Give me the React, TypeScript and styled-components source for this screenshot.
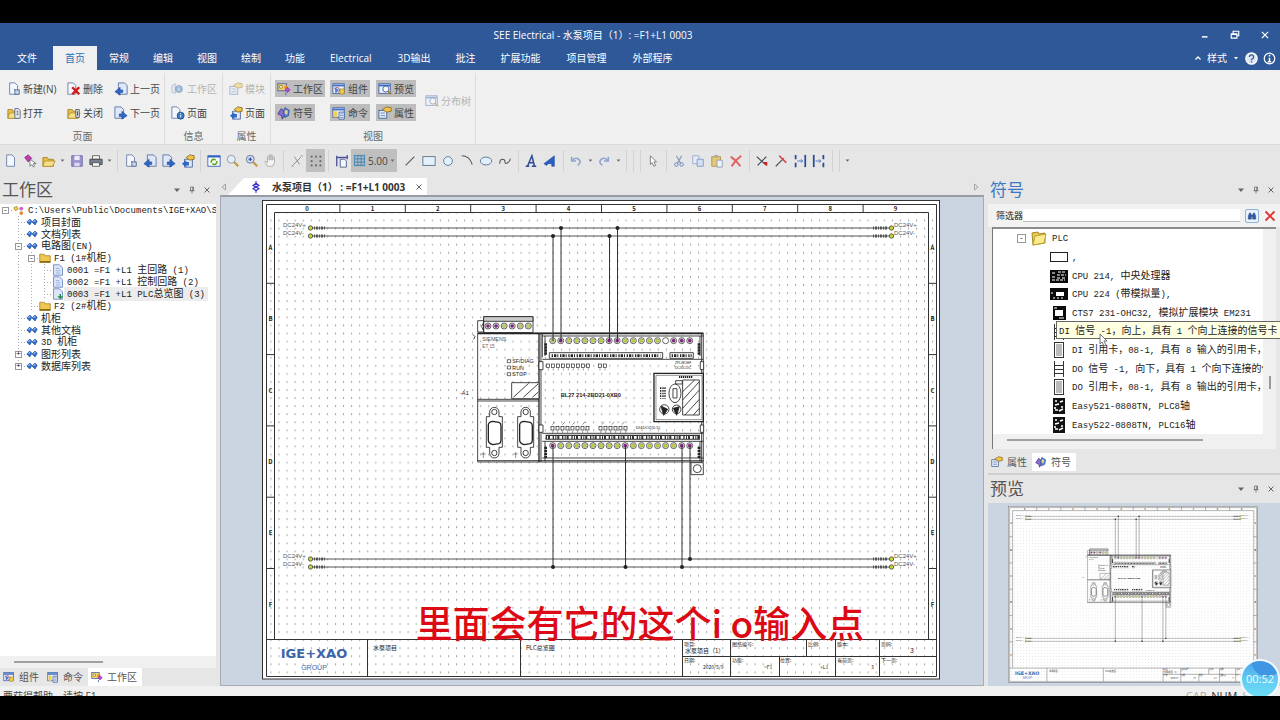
import React from "react";
import styled, { createGlobalStyle, css } from "styled-components";

const ui = `"Open Sans", "Noto Sans CJK SC", sans-serif`;
const mono = `"Liberation Mono", "Noto Sans CJK SC", monospace`;

const GlobalStyle = createGlobalStyle`
  *, *::before, *::after { box-sizing: border-box; }
  body { margin: 0; background: #000; }
  button, input { font: inherit; color: inherit; margin: 0; padding: 0; border: 0; background: none; border-radius: 0; }
  ul { list-style: none; margin: 0; padding: 0; }
  svg { display: block; flex: none; }
`;

/* ---------- icons ---------- */

const page = (x = 3, y = 1) => (
  <path d={`M${x} ${y}h6l3 3v10h-9z`} fill="#f4f7fd" stroke="#6a7ba6" />
);
const folder = (
  <>
    <path d="M1 4h5l1 2h6v8H1z" fill="#e3bd4e" stroke="#a98524" />
    <path d="M3 8h12l-3 6H1z" fill="#f8e08a" stroke="#b8932c" />
  </>
);
const badgeInfo = (cx: number, cy: number) => (
  <>
    <circle cx={cx} cy={cy} r="4" fill="#3b7dc4" stroke="#1f4f8c" />
    <path d={`M${cx} ${cy - 1}v3M${cx} ${cy - 3}v1`} stroke="#fff" />
  </>
);
const windowShape = (
  <>
    <rect x="1" y="2" width="13" height="11" fill="#e8f0fb" stroke="#3f62a8" />
    <path d="M1 3h13v2H1z" fill="#3f6fc0" />
  </>
);

const icons: Record<string, React.ReactNode> = {
  doc: page(),
  docNew: <>{page()}<path d="M8 8l5 5M13 9v4H9" stroke="#3c5f9c" fill="none" /><path d="M9 9h5v5H9z" fill="#cbd9ef" stroke="#4f6596" /></>,
  docDelete: <>{page(1)}<path d="M6 6l8 8M14 6l-8 8" stroke="#d01818" strokeWidth="2.8" /></>,
  docPrev: <><path d="M5 1h7l3 3v10H5z" fill="#dfe8f8" stroke="#5a6fa6" /><path d="M10 9H7V6l-6 5 6 4v-3h3z" fill="#2f66c9" stroke="#1d438c" strokeWidth=".6" /></>,
  docNext: <><path d="M1 1h7l3 3v10H1z" fill="#dfe8f8" stroke="#5a6fa6" /><path d="M6 9h3V6l6 5-6 4v-3H6z" fill="#2f66c9" stroke="#1d438c" strokeWidth=".6" /></>,
  folder,
  folderPage: <>{folder}<path d="M9 3h4l2 2v9H9z" fill="#eef2fa" stroke="#4f5f86" /><path d="M11 6h2M11 8h2M11 10h2" stroke="#444" /></>,
  folderClose: <>{folder}<path d="M10 4h4v9h-4z" fill="#dfe4ea" stroke="#555" /><path d="M12 6v5" stroke="#345" /></>,
  info: <><path d="M1 4l4-2v11l-4-1z" fill="#cfdcf0" stroke="#7d94bd" />{badgeInfo(9, 8)}</>,
  docInfo: <>{page(1)}{badgeInfo(11, 11)}</>,
  props: <><rect x="1" y="5" width="9" height="9" fill="#dfe8f7" stroke="#49659c" /><path d="M3 8h5M3 11h5" stroke="#6b86bd" /><path d="M5 4l5-3 5 1v4l-5 1z" fill="#f1c54c" stroke="#8d6b1c" /></>,
  propsPage: <><path d="M4 6h9v9H4z" fill="#dfe8f7" stroke="#49659c" /><path d="M6 4l4-3 5 1v4l-5 1z" fill="#f1c54c" stroke="#8d6b1c" /><path d="M9 9H6V7l-5 4 5 4v-2h3z" fill="#2f66c9" /></>,
  workspace: <><rect x="1" y="2" width="10" height="8" fill="#f4d66a" stroke="#3f62a8" /><path d="M3 4h3v3H3z" fill="#fff" stroke="#a07c22" /><circle cx="10" cy="6" r="2" fill="#e98a2b" /><path d="M12 6l3 3-3 3-3-3z" fill="#b54bd0" stroke="#6d2384" strokeWidth=".6" /><path d="M10 12v3" stroke="#3f62a8" /></>,
  component: <>{windowShape}<path d="M3 8a3 3 0 1 1 4 4" fill="none" stroke="#c23a3a" /><path d="M9 8h5v5a3 2 0 0 1-5 0z" fill="#f3cb4a" stroke="#9a7a1c" strokeWidth=".7" /><path d="M3 6l5 3-4 4z" fill="#4d7fd6" /></>,
  preview: <>{windowShape}<circle cx="9" cy="8" r="3.500" fill="#fff" fillOpacity=".8" stroke="#3a5890" /><path d="M11 10l4 4" stroke="#a8752c" strokeWidth="2" /></>,
  symbol: <><path d="M5 3L1 9l4 2 1 4 4-7z" fill="#8a6fd1" stroke="#4a358c" /><path d="M9 2l5 3-1 6-4 2-2-6z" fill="#5f8fdc" stroke="#2f4f96" /><path d="M9 5h3v4H9z" fill="#f1d36a" /></>,
  command: <>{windowShape}<path d="M2 6h4v7H2z" fill="#f2cf57" /><path d="M8 7h6v8H8z" fill="#fff" stroke="#3f62a8" /><path d="M9 9h4M9 11h4M9 13h4" stroke="#3f62a8" strokeWidth=".8" /></>,
  library: <><path d="M2 4l4-3 4 4-4 4z" fill="#c23bb0" stroke="#82217a" /><path d="M8 6v8l2-2 2 3 1-1-1-3h3z" fill="#fff" stroke="#555" strokeWidth=".8" /></>,
  save: <><path d="M2 2h12v12H2z" fill="#9a93cf" stroke="#6d66a8" /><path d="M5 2h6v5H5z" fill="#eceaf8" /><path d="M5 10h6v4H5z" fill="#dcdaf0" /></>,
  print: <><path d="M4 2h8v4H4z" fill="#fff" stroke="#555" /><path d="M1 6h14v6H1z" fill="#777f8c" stroke="#444" /><path d="M4 10h8v4H4z" fill="#fff" stroke="#555" /></>,
  refresh: <><rect x="1" y="2" width="14" height="12" fill="#fff" stroke="#2f62c0" /><path d="M1 2h14v2H1z" fill="#2f62c0" /><path d="M5 10a3 3 0 0 1 3-4l2 1M11 8a3 3 0 0 1-3 4l-2-1" fill="none" stroke="#59a516" strokeWidth="1.8" /></>,
  zoom: <><circle cx="6" cy="6" r="4.5" fill="#e4eef8" stroke="#8a93a1" /><path d="M9.500 9.500l4.500 4.500" stroke="#c59a3e" strokeWidth="2.400" /></>,
  zoomIn: <><circle cx="6" cy="6" r="4.500" fill="#cfdcf2" stroke="#66718f" /><path d="M4 6h4M6 4v4" stroke="#2a4ea0" strokeWidth="1.400" /><path d="M9.500 9.500l4.500 4.500" stroke="#c59a3e" strokeWidth="2.400" /></>,
  hand: <path d="M4 14L1 9l1-1 2 2V3l1-1 1 1v4-6l1-.500 1 .500v6-5l1-.500 1 .500v5-3l1-.500 1 .500v6l-2 4z" fill="#f3f3f3" stroke="#a9a9a9" />,
  snap: <><path d="M2 14L13 3M5 3l6 9" stroke="#888" fill="none" /><path d="M12 2h3M2 14h2" stroke="#aaa" /></>,
  dots: <path d="M2 2h2v2H2zM7 2h2v2H7zM12 2h2v2h-2zM2 7h2v2H2zM12 7h2v2h-2zM2 12h2v2H2zM7 12h2v2H7zM12 12h2v2h-2z" fill="#5d5d66" />,
  dims: <><path d="M2 2v12M2 4h12M14 1v5" stroke="#4b4f9a" strokeWidth="1.500" fill="none" /><path d="M6 6h5l2 2v7H6z" fill="#f4f7fd" stroke="#4a5b86" /></>,
  grid: <path d="M2 1v14M6 1v14M10 1v14M14 1v14M1 2h14M1 6h14M1 10h14M1 14h14" stroke="#4f8db8" strokeWidth="1.400" />,
  line: <path d="M3 13L13 3" stroke="#555" strokeWidth="1.300" />,
  rect: <rect x="1" y="3" width="14" height="10" fill="#e5f1fa" stroke="#54718f" />,
  circle: <circle cx="8" cy="8" r="5" fill="#e5f1fa" stroke="#54718f" />,
  arc: <path d="M2 2q9 0 12 10" fill="none" stroke="#555" strokeWidth="1.200" />,
  ellipse: <ellipse cx="8" cy="8" rx="6.500" ry="4.500" fill="#dfeefa" stroke="#54718f" />,
  curve: <path d="M2 11q0-5 3-5t3 3 3 1 3-5" fill="none" stroke="#555" strokeWidth="1.200" />,
  text: <><path d="M2 14h4M9 14h5M4 14l5-12 3 12M6 10h5" fill="none" stroke="#2c4c94" strokeWidth="1.700" /></>,
  textBlock: <path d="M1 11l12-9v12h-3v-3H6l-2 2z" fill="#2760c4" stroke="#1d4696" strokeWidth=".600" />,
  undo: <path d="M3 3v5h5M3 8q4-5 8-2t-1 7" fill="none" stroke="#8fa4ce" strokeWidth="1.800" />,
  redo: <path d="M13 3v5H8M13 8Q9 3 5 6t1 7" fill="none" stroke="#8fa4ce" strokeWidth="1.800" />,
  cursor: <path d="M5 2v10l2-2 2 4 2-1-2-4h3z" fill="#fff" stroke="#70747c" />,
  cut: <><path d="M5 2l5 9M11 2L6 11" stroke="#8b9bb8" strokeWidth="1.400" /><circle cx="5" cy="12" r="2" fill="none" stroke="#5f7fbd" /><circle cx="11" cy="12" r="2" fill="none" stroke="#5f7fbd" /></>,
  copy: <><path d="M2 2h7v9H2z" fill="#e4ebf7" stroke="#97a9cd" /><path d="M7 6h7v8H7z" fill="#d3dff3" stroke="#8497c2" /></>,
  paste: <><path d="M2 3h10v11H2z" fill="#e5c874" stroke="#b09449" /><path d="M5 1h4v3H5z" fill="#aaa" /><path d="M8 7h6v8H8z" fill="#eef2fa" stroke="#8d9bb8" /></>,
  remove: <path d="M2 3q6 4 11 11M14 2Q7 7 3 14" fill="none" stroke="#e06363" strokeWidth="2.400" />,
  cross: <path d="M2 2l12 12M14 2L2 14" stroke="#e03030" strokeWidth="2.400" />,
  cutWire: <><path d="M2 3l11 10M13 3L3 13" stroke="#444b55" strokeWidth="1.400" /><path d="M9 9h5v5z" fill="#d82020" /></>,
  trimWire: <><path d="M2 14L11 5" stroke="#555" strokeWidth="1.400" /><path d="M6 2l8 8" stroke="#d83c4a" strokeWidth="1.800" /></>,
  alignRight: <><path d="M14 1v14" stroke="#294a97" strokeWidth="2" /><path d="M3 1v14" stroke="#294a97" strokeWidth="2" strokeDasharray="5 4" /><path d="M5 8h6M9 6l2 2-2 2" stroke="#3f6fc0" fill="none" /></>,
  alignLeft: <><path d="M2 1v14" stroke="#294a97" strokeWidth="2" /><path d="M13 1v14" stroke="#294a97" strokeWidth="2" strokeDasharray="5 4" /><path d="M4 8h6M8 6l2 2-2 2" stroke="#3f6fc0" fill="none" /></>,
  sheetMark: <><path d="M8 0v16" stroke="#3a35c8" strokeWidth="1.400" /><path d="M4 6l4-3 4 3-8 4 4 3 4-3z" fill="#dcdcff" stroke="#3a35c8" strokeWidth="1.500" /></>,
  gems: <><path d="M1 8l4-4 3 3-3 5zM8 8l4-4 3 3-3 5z" fill="#2f6fd0" stroke="#1c4690" strokeWidth=".800" /><path d="M2 8l3-3 1 2zM9 8l3-3 1 2z" fill="#9cc4f5" /></>,
  project: <><path d="M1 5l4-2 2 4-4 2z" fill="#f0cf4c" stroke="#a8882c" /><circle cx="11" cy="6" r="2.500" fill="#cb62cf" /><circle cx="11" cy="12" r="2.500" fill="#e08a3c" /></>,
  treeFolder: <><path d="M1 3h6l1 2h7v9H1z" fill="#f0c751" stroke="#a37d1c" /><path d="M1 13h14" stroke="#8d6b14" strokeWidth="2" /></>,
  treeDoc: <><path d="M2 1h8l4 4v10H2z" fill="#dbe6fb" stroke="#5b76b8" /><path d="M5 6h5M5 9h6M5 12h6" stroke="#8aa4dc" /></>,
  treeDocOpen: <><path d="M2 1h8l4 4v10H2z" fill="#dbe6fb" stroke="#5b76b8" /><path d="M7 11h8l-4 4z" fill="#23943a" /><path d="M11 8v4" stroke="#23943a" strokeWidth="2" /></>,
  bigFolder: <><path d="M1 3l6-1 1 2 6-1v10L2 15z" fill="#e9c94c" stroke="#a58a24" /><path d="M4 6l11-2-2 9-11 2z" fill="#fbec8e" stroke="#bda238" /></>,
  find: <path d="M2 13V8l2-5h2v3h4V3h2l2 5v5H9V9H7v4z" fill="#31599f" stroke="#1f3f7a" strokeWidth=".600" />,
  pin: <path d="M5 2h6v7H5zM3 9.500h10M8 10v5M9.500 2v7" fill="none" stroke="#666" strokeWidth="1.500" />,
  close: <path d="M3 3l10 10M13 3L3 13" stroke="#666" strokeWidth="2" />,
  down: <path d="M2 5h12l-6 7z" fill="#666" />,
  scrollLeft: <path d="M11 2v12L4 8z" fill="none" stroke="#888" strokeWidth="1.400" />,
  scrollRight: <path d="M5 2v12l7-6z" fill="none" stroke="#888" strokeWidth="1.400" />,
  minimize: <path d="M3 11h9" stroke="#fff" strokeWidth="2.400" />,
  restore: <path d="M5 6V2h9v7h-3M2 6h9v7H2zM2 7h9" fill="none" stroke="#fff" strokeWidth="1.800" />,
  closeWhite: <path d="M3 3l10 10M13 3L3 13" stroke="#fff" strokeWidth="2" />,
  chevronUp: <path d="M3 11l5-5 5 5" fill="none" stroke="#fff" strokeWidth="2.600" />,
  caretWhite: <path d="M4 6h8l-4 5z" fill="#fff" />,
  help: <><circle cx="8" cy="8" r="7" fill="#dfe7f3" stroke="#fff" strokeWidth="1.500" /><path d="M5.500 6q0-2.500 2.500-2.500T10.500 6 8 9v1M8 11.500v1.500" fill="none" stroke="#2f5898" strokeWidth="1.600" /></>,
  about: <><circle cx="8" cy="8" r="6.500" fill="none" stroke="#fff" strokeWidth="1.500" /><path d="M8 7v5M6 12h4M8 3.500v2" stroke="#fff" strokeWidth="1.800" /></>,
  plcBox: <rect x="0.500" y="3.500" width="17" height="9" fill="#fff" stroke="#222" />,
  plc214: <><rect x="0" y="2" width="18" height="13" fill="#0a0a0a" /><path d="M2 5h4M8 4h8M7 7h9M2 9h3M7 10h4M12 10h4M2 12h13" stroke="#fff" strokeWidth="1" strokeDasharray="3 1" /></>,
  plc224: <><rect x="0" y="2" width="18" height="12" fill="#0a0a0a" /><rect x="6" y="6" width="8" height="4" fill="#fff" /><path d="M2 6v4M3 12h12" stroke="#fff" strokeDasharray="2 2" /></>,
  plc231: <><path d="M3 1h13v14H3z" fill="#0a0a0a" /><path d="M5 5h8v6H5z" fill="#fff" /><path d="M4 3h3M9 13h5" stroke="#fff" /></>,
  plcDI: <><path d="M4.500 0v16M13.500 0v16M4 .500h10M4 15.500h10" stroke="#333" fill="none" /><path d="M6 3h6M6 5h6M6 7h6M6 9h6M6 11h6M6 13h6" stroke="#777" /></>,
  plcDO: <path d="M4.500 0v16M13.500 0v16M4 4.500h10M4 8.500h10M4 12.500h10" stroke="#333" fill="none" />,
  plcEasy: <><path d="M3 0h12v16H3z" fill="#111" /><path d="M5 3h2M5 7l4-1M5 12h3M10 4l3-1M11 9h2M9 13l4-2M5 9v2" stroke="#fff" strokeWidth="1.600" /></>,
};

const Icon = ({ name, size = 14 }: { name: string; size?: number }) => (
  <svg width={size} height={size} viewBox={name.startsWith("plc") ? "0 0 18 16" : "0 0 16 16"} aria-hidden="true">
    {icons[name]}
  </svg>
);

/* ---------- frame ---------- */

const Stage = styled.div`
  display: flex;
  flex-direction: column;
  min-height: 100vh;
  padding: 23px 0 24px;
  background: #000;
`;
const Frame = styled.div`
  position: relative;
  flex: 1;
  display: flex;
  flex-direction: column;
  overflow: hidden;
  background: #e6e6e6;
  color: #444;
  font-family: ${ui};
  font-size: 10px;
  line-height: 14px;
`;

/* ---------- title bar and tabs ---------- */

const TitleBar = styled.header`
  display: grid;
  grid-template-columns: 1fr auto 1fr 84px;
  align-items: center;
  height: 23px;
  padding-right: 10px;
  background: #2f5898;
  color: #fff;
`;
const Title = styled.h1`
  grid-column: 2;
  margin: 0;
  font-size: 10px;
  font-weight: 400;
  white-space: pre;
`;
const WindowButtons = styled.div`
  grid-column: 4;
  display: flex;
  justify-content: flex-end;
  gap: 20px;
`;
const IconButton = styled.button`
  display: inline-flex;
  align-items: center;
  justify-content: center;
`;
const TabBar = styled.nav`
  display: flex;
  height: 24px;
  padding-left: 1px;
  background: #2f5898;
  color: #fff;
`;
const MenuTab = styled.button<{ $active?: boolean; $pad: number }>`
  padding: 0 ${(p) => p.$pad}px;
  white-space: nowrap;
  ${(p) => p.$active && css`background: #f0f0f0; color: #2a6fb8;`}
`;
const TabTools = styled.div`
  display: flex;
  align-items: center;
  gap: 5px;
  margin-left: auto;
  padding-right: 4px;
`;

/* ---------- ribbon ---------- */

const Ribbon = styled.section`
  display: flex;
  height: 75px;
  padding: 3px 0 0 1px;
  background: #f0f0f0;
  border-bottom: 1px solid #dadada;
`;
const Group = styled.div`
  display: flex;
  flex-direction: column;
  border-right: 1px solid #dcdcdc;
  padding: 7px 4px 0;
`;
const GroupGrid = styled.div<{ $cols: string }>`
  display: grid;
  grid-template-columns: ${(p) => p.$cols};
  grid-template-rows: 17px 17px;
  row-gap: 7px;
  justify-items: start;
`;
const GroupLabel = styled.div`
  margin-top: 8px;
  text-align: center;
  color: #666;
`;
const RibbonButton = styled.button<{ $on?: boolean; $tall?: boolean }>`
  display: flex;
  align-items: center;
  gap: 2px;
  height: 17px;
  padding: 0 2px;
  white-space: nowrap;
  background: ${(p) => (p.$on ? "#bdbdbd" : "transparent")};
  ${(p) => p.$tall && css`grid-row: 1 / 3; grid-column: 4; align-self: center;`}
  &:disabled { color: #b4b4b4; }
  &:disabled svg { opacity: 0.45; }
`;

type Item = { icon: string; text: string; on?: boolean; off?: boolean; tall?: boolean };
const groups: { label: string; cols: string; items: Item[] }[] = [
  {
    label: "页面",
    cols: "60px 47px 48px",
    items: [
      { icon: "docNew", text: "新建(N)" },
      { icon: "docDelete", text: "删除" },
      { icon: "docPrev", text: "上一页" },
      { icon: "folderPage", text: "打开" },
      { icon: "folderClose", text: "关闭" },
      { icon: "docNext", text: "下一页" },
    ],
  },
  {
    label: "信息",
    cols: "49px",
    items: [{ icon: "info", text: "工作区", off: true }, { icon: "docInfo", text: "页面" }],
  },
  {
    label: "属性",
    cols: "39px",
    items: [{ icon: "props", text: "模块", off: true }, { icon: "propsPage", text: "页面" }],
  },
  {
    label: "视图",
    cols: "55px 46px 47px 48px",
    items: [
      { icon: "workspace", text: "工作区", on: true },
      { icon: "component", text: "组件", on: true },
      { icon: "preview", text: "预览", on: true },
      { icon: "symbol", text: "符号", on: true },
      { icon: "command", text: "命令", on: true },
      { icon: "props", text: "属性", on: true },
      { icon: "preview", text: "分布树", off: true, tall: true },
    ],
  },
];

/* ---------- toolbar ---------- */

const Toolbar = styled.section`
  display: flex;
  align-items: center;
  height: 31px;
  padding-left: 1px;
`;
const Tool = styled.button<{ $on?: boolean }>`
  display: flex;
  align-items: center;
  justify-content: center;
  width: 19px;
  height: 23px;
  background: ${(p) => (p.$on ? "#bfbfbf" : "transparent")};
`;
const Arrow = styled.button`
  display: flex;
  justify-content: center;
  width: 9px;
`;
const Separator = styled.span`
  width: 1px;
  height: 22px;
  margin: 0 3px;
  background: #d2d2d2;
`;
const GridStep = styled.button`
  display: flex;
  align-items: center;
  gap: 2px;
  height: 23px;
  margin-right: 4px;
  padding: 0 2px;
  background: #bfbfbf;
`;
const tools =
  "doc library folder v save print v | docNew docPrev docNext propsPage | refresh zoom zoomIn hand | snap dots! | dims # line rect circle arc ellipse curve | text textBlock | undo v redo v | | | cursor | cut copy paste remove | cutWire trimWire alignRight alignLeft | | v".split(" ");

/* ---------- panels ---------- */

const Main = styled.main`
  flex: 1;
  display: grid;
  grid-template-columns: 216px minmax(0, 1fr) 292px;
  column-gap: 4px;
`;
const Panel = styled.aside`
  display: flex;
  flex-direction: column;
  min-width: 0;
`;
const PanelHead = styled.div`
  display: flex;
  align-items: center;
  height: 28px;
  padding: 0 2px;
`;
const PanelTitle = styled.h2<{ $active?: boolean }>`
  flex: 1;
  margin: 0;
  font-size: 17px;
  line-height: 24px;
  font-weight: 400;
  color: ${(p) => (p.$active ? "#3a78c3" : "#555")};
`;
const HeadButton = styled(IconButton)`
  width: 15px;
`;
const Head = ({ title, active }: { title: string; active?: boolean }) => (
  <PanelHead>
    <PanelTitle $active={active}>{title}</PanelTitle>
    <HeadButton aria-label="菜单"><Icon name="down" size={8} /></HeadButton>
    <HeadButton aria-label="固定"><Icon name="pin" size={8} /></HeadButton>
    <HeadButton aria-label="关闭"><Icon name="close" size={8} /></HeadButton>
  </PanelHead>
);

const Latin = styled.span`
  font-family: ${mono};
  font-size: 9px;
  white-space: pre;
`;
const Han = styled.span`
  font-family: "Noto Sans CJK SC", sans-serif;
  font-size: 10px;
`;
const MonoText = ({ children }: { children: string }) => (
  <>
    {children.split(/([\u2e80-\uffef]+)/).filter(Boolean).map((run, i) =>
      /[\u2e80-\uffef]/.test(run) ? <Han key={i}>{run}</Han> : <Latin key={i}>{run}</Latin>
    )}
  </>
);

const Tree = styled.ul`
  flex: 1;
  overflow: hidden;
  background: #fff;
  color: #222;
`;
const TreeRow = styled.li`
  display: flex;
  align-items: center;
  height: 12px;
  line-height: 12px;
  white-space: nowrap;
`;
const Guide = styled.span<{ $line?: boolean; $stub?: boolean }>`
  display: flex;
  align-items: center;
  width: 13px;
  height: 12px;
  padding-left: 2px;
  flex: none;
  background-image:
    ${(p) => (p.$line ? "repeating-linear-gradient(#aaa 0 1px, transparent 1px 3px)" : "none")},
    ${(p) => (p.$stub ? "repeating-linear-gradient(90deg, #aaa 0 1px, transparent 1px 3px)" : "none")};
  background-size: 1px 100%, 8px 1px;
  background-position: 5px 0, 5px 6px;
  background-repeat: no-repeat;
`;
const Toggle = styled.button`
  display: flex;
  align-items: center;
  justify-content: center;
  width: 7px;
  height: 7px;
  border: 1px solid #999;
  background: #fff;
  font-family: ${mono};
  font-size: 8px;
  line-height: 6px;
`;
const TreeText = styled.span<{ $selected?: boolean }>`
  padding: 0 3px;
  background: ${(p) => (p.$selected ? "#ececec" : "transparent")};
`;

type Node = { level: number; icon: string; text: string; toggle?: string; selected?: boolean };
const nodes: Node[] = [
  { level: 0, icon: "project", text: "C:\\Users\\Public\\Documents\\IGE+XAO\\S", toggle: "-" },
  { level: 1, icon: "gems", text: "项目封面" },
  { level: 1, icon: "gems", text: "文档列表" },
  { level: 1, icon: "gems", text: "电路图(EN)", toggle: "-" },
  { level: 2, icon: "treeFolder", text: "F1 (1#机柜)", toggle: "-" },
  { level: 3, icon: "treeDoc", text: "0001 =F1 +L1 主回路 (1)" },
  { level: 3, icon: "treeDoc", text: "0002 =F1 +L1 控制回路 (2)" },
  { level: 3, icon: "treeDocOpen", text: "0003 =F1 +L1 PLC总览图 (3)", selected: true },
  { level: 2, icon: "treeFolder", text: "F2 (2#机柜)" },
  { level: 1, icon: "gems", text: "机柜" },
  { level: 1, icon: "gems", text: "其他文档" },
  { level: 1, icon: "gems", text: "3D 机柜" },
  { level: 1, icon: "gems", text: "图形列表", toggle: "+" },
  { level: 1, icon: "gems", text: "数据库列表", toggle: "+" },
];

const HScroll = styled.div<{ $width: number }>`
  height: 12px;
  padding: 5px 14px;
  background: #f0f0f0;
  &::before {
    content: "";
    display: block;
    width: ${(p) => p.$width}px;
    height: 2px;
    background: #a0a0a0;
  }
`;
const DockTabs = styled.div`
  display: flex;
  height: 18px;
`;
const DockTab = styled.button<{ $active?: boolean }>`
  display: flex;
  align-items: center;
  gap: 4px;
  padding: 0 5px 0 3px;
  color: #555;
  background: ${(p) => (p.$active ? "#fff" : "transparent")};
`;

/* ---------- document area ---------- */

const Center = styled.section`
  display: flex;
  flex-direction: column;
  min-width: 0;
`;
const DocTabs = styled.div`
  display: flex;
  align-items: center;
  height: 19px;
  padding: 2px 4px 0 0;
`;
const DocTab = styled.div`
  display: flex;
  align-items: center;
  gap: 10px;
  height: 17px;
  margin-right: auto;
  padding: 0 4px 0 22px;
  background: #fff;
  color: #333;
  font-weight: 700;
  white-space: pre;
  clip-path: polygon(16px 0, 100% 0, 100% 100%, 0 100%);
`;
const Canvas = styled.div`
  flex: 1;
  padding: 3px 43px 0 41px;
  border: 1px solid #a7abb3;
  border-top: 2px solid #9a9ca3;
  background: #cbd5e2;
`;
const Sheet = styled.svg`
  width: 100%;
  height: auto;
`;

/* ---------- symbols panel ---------- */

const FilterRow = styled.div`
  display: flex;
  align-items: center;
  gap: 5px;
  height: 23px;
  padding: 0 4px 0 8px;
  background: #f2f2f2;
`;
const FilterLabel = styled.label`
  flex: 1;
  display: flex;
  align-items: center;
  color: #222;
  font-size: 9px;
  white-space: nowrap;
`;
const FilterInput = styled.input`
  flex: 1;
  min-width: 0;
  height: 13px;
  background: #fff;
  border-bottom: 1px solid #bbb;
`;
const SmallButton = styled(IconButton)`
  width: 14px;
  height: 14px;
  border: 1px solid #8fb3dc;
  border-radius: 2px;
  background: #eaf3fc;
`;
const ListBox = styled.div`
  display: grid;
  grid-template-columns: minmax(0, 1fr) 13px;
  height: 222px;
  margin: 0 4px 4px;
  border-top: 2px solid #8c8c8c;
  border-left: 1px solid #777;
  background: #f0f0f0;
`;
const SymbolList = styled.ul`
  display: flex;
  flex-direction: column;
  padding-bottom: 3px;
  background: linear-gradient(#fff, #fff) top / 100% 206px no-repeat;
  color: #222;
`;
const SymbolRow = styled.li<{ $root?: boolean }>`
  position: relative;
  flex: 1;
  display: flex;
  align-items: center;
  gap: ${(p) => (p.$root ? 5 : 4)}px;
  min-height: 0;
  padding-left: ${(p) => (p.$root ? 24 : 57)}px;
  white-space: nowrap;
`;
const RowText = styled.span`
  flex: 1;
  min-width: 0;
  overflow: hidden;
  line-height: 14px;
`;
const Tip = styled.div`
  position: absolute;
  z-index: 2;
  left: 63px;
  top: -1px;
  height: 18px;
  padding: 0 2px;
  border: 1px solid #666;
  background: #ffffe1;
  line-height: 16px;
  svg { position: absolute; left: 38px; top: 10px; }
`;
const VScroll = styled.div`
  display: flex;
  justify-content: center;
  padding-top: 147px;
  &::before { content: ""; width: 2px; height: 13px; background: #999; }
`;
const BigToggle = styled(Toggle)`
  width: 9px;
  height: 9px;
`;
const PreviewBox = styled.section`
  flex: 1;
  display: flex;
  flex-direction: column;
  margin-top: 2px;
  border-top: 2px solid #d0d0d0;
`;
const PreviewArea = styled.div`
  flex: 1;
  padding: 3px 22px 0 20px;
  background: #cbd5e2;
`;

const symbols = [
  ["plcBox", ","],
  ["plc214", "CPU 214, 中央处理器"],
  ["plc224", "CPU 224 (带模拟量),"],
  ["plc231", "CTS7 231-OHC32, 模拟扩展模块 EM231"],
  ["plcDO", ""],
  ["plcDI", "DI 引用卡，08-1, 具有 8 输入的引用卡，"],
  ["plcDO", "DO 信号 -1, 向下，具有 1 个向下连接的信"],
  ["plcDI", "DO 引用卡，08-1, 具有 8 输出的引用卡，"],
  ["plcEasy", "Easy521-0808TN, PLC8轴"],
  ["plcEasy", "Easy522-0808TN, PLC16轴"],
];

/* ---------- status bar and overlays ---------- */

const StatusBar = styled.footer`
  display: flex;
  height: 10px;
  padding: 4px 4px 0 3px;
  overflow: hidden;
  background: #f0f0f0;
  line-height: 12px;
`;
const Keys = styled.span`
  display: flex;
  gap: 5px;
  margin-left: auto;
  padding-right: 8px;
  font-size: 11px;
  color: #aaa;
  b { font-weight: 400; color: #333; }
`;
const Subtitle = styled.p`
  position: absolute;
  left: 0;
  right: 0;
  bottom: 50px;
  margin: 0;
  text-align: center;
  font-family: "Noto Sans CJK SC", sans-serif;
  font-size: 37px;
  line-height: 48px;
  font-weight: 500;
  color: #dc0a14;
`;
const Timer = styled.div`
  position: absolute;
  right: 0;
  bottom: -3px;
  width: 40px;
  height: 40px;
  border: 2px solid #f2f8fd;
  border-radius: 50%;
  background: radial-gradient(circle at 70% 0, #3f97e4 0 35%, transparent 36%), linear-gradient(#4ba3ea, #62cdf3 55%, #6fdcf5);
  color: #f4fbff;
  font-size: 11px;
  line-height: 36px;
  text-align: center;
`;

/* ---------- schematic ---------- */

const PITCH = 24.2;
const terminalColor = (k: string) => (k === "p" ? "#8a1d8f" : k === "w" ? "#fff" : "#c3d43a");
const Terminals = ({ x, y, kinds }: { x: number; y: number; kinds: string }) => (
  <>
    {kinds.split("").map((k, i) => (
      <g key={i}>
        <circle cx={x + i * PITCH} cy={y} r="9" fill="#fff" stroke="#444" strokeWidth="2.500" />
        <circle cx={x + i * PITCH} cy={y} r="5.500" fill={terminalColor(k)} stroke={k === "w" ? "#fff" : "#665"} strokeWidth="1" />
      </g>
    ))}
  </>
);
const Squares = ({ x, y, n }: { x: number; y: number; n: number }) => (
  <>
    {Array.from({ length: n }, (_, i) => (
      <g key={i}>
        <rect x={x + i * 15} y={y} width="9" height="10" fill="#fff" stroke="#222" strokeWidth="2" />
        <path d={`M${x + 5 + i * 15} ${y + 13}v6`} stroke="#666" strokeWidth="2" />
      </g>
    ))}
  </>
);
const Port = ({ x }: { x: number }) => (
  <g fill="#fff" stroke="#222" strokeWidth="2.500">
    <path d={`M${x - 24} 350h10v-14a14 14 0 0 1 28 0v14h10v92h-10v18a14 14 0 0 1-28 0v-18h-10z`} />
    <circle cx={x} cy="336" r="8" />
    <circle cx={x} cy="459" r="8" />
    <path d={`M${x - 18} 374q2-10 14-10l18 3q6 2 6 10v44q0 8-6 10l-18 3q-12-2-14-12z`} strokeWidth="4" />
  </g>
);

const Plc = () => (
  <g transform="translate(455 300) scale(0.3333)" fontFamily="Liberation Sans, sans-serif" fill="#222">
    <g fill="none" stroke="#222" strokeWidth="2.500">
      <path d="M86 50h148v48H86z" fill="#fff" />
      <path d="M86 50h148v14H86z" fill="#ccc" />
      <path d="M68 62h18v34H68zM84 70q-8 8 0 20" />
      <path d="M68 100h184v386H68z" />
      <path d="M68 298h184M68 303h184" />
      <path d="M252 100h493v386H252z" />
      <path d="M68 100h677" strokeWidth="5" />
      <path d="M258 100v386M262 108h483M262 178h483M262 172V100M740 100v386M270 108v60M735 108v60M262 400h483M262 424h483M262 474h483M270 424v60M735 424v60M68 482h677" />
      <path d="M252 185h12v24h-12zM252 375h12v22h-12zM736 185h10v24h-10zM736 375h10v22h-10z" fill="#fff" />
      <path d="M170 248h82v48h-82z" fill="#fff" />
      <path d="M175 292l46-42M205 292l44-40M232 292l18-16" />
    </g>
    <Terminals x={99} y={78} kinds="ppypyy" />
    <Terminals x={293} y={122} kinds="ypyyyyyppyyyyywppp" />
    <path d="M283 158h340v17H283zM645 158h70v17h-70z" fill="#fff" stroke="#222" strokeWidth="2.500" />
    <path d="M290 167h326M650 167h60" stroke="#222" strokeWidth="8" strokeDasharray="4 3 7 3 3 5" />
    <path d="M272 412h463" stroke="#333" strokeWidth="15" />
    <path d="M276 412h455" stroke="#fff" strokeWidth="8" strokeDasharray="3 6 8 4 4 3" />
    <path d="M272 130v34M732 130v34M272 440v34M732 440v34" stroke="#222" strokeWidth="8" strokeDasharray="7 2" />
    <Squares x={275} y={192} n={9} />
    <Squares x={430} y={192} n={2} />
    <Squares x={288} y={380} n={8} />
    <Squares x={432} y={380} n={6} />
    <path d="M292 374l8-8M322 374l8-8M352 374l8-8M382 374l8-8M440 374l8-8M470 374l8-8M500 374l8-8" stroke="#555" strokeWidth="2" />
    <text x="82" y="123" fontSize="16" fill="#555">SIEMENS</text>
    <text x="82" y="143" fontSize="14" fill="#666">ET 15</text>
    <text x="172" y="190" fontSize="16">SF/DIAG</text>
    <text x="172" y="209" fontSize="16">RUN</text>
    <text x="172" y="229" fontSize="16">STOP</text>
    <path d="M157 179h10v9h-10zM157 198h10v9h-10zM157 218h10v9h-10z" fill="#fff" stroke="#222" strokeWidth="2" />
    <text x="317" y="291" fontSize="17" fontWeight="700">BL27 214-2BD21-0XB0</text>
    <text x="542" y="388" fontSize="13">DI4DO2(0.5)</text>
    <text x="660" y="193" fontSize="10">ZPL/BOHF</text>
    <text x="660" y="207" fontSize="10">DC/DC/DC</text>
    <text x="15" y="285" fontSize="17">-A1</text>
    <path d="M54 104l6 6-4 8" stroke="#222" strokeWidth="2.500" fill="none" />
    <g fill="#fff" stroke="#222" strokeWidth="2.500">
      <path d="M597 220h148v145H597z" strokeWidth="4" />
      <path d="M603 226h138v133H603z" strokeWidth="1.500" />
      <path d="M683 240h50v105h-50z" />
      <path d="M683 275l36-35M683 300l50-55M683 325l50-55M690 345l43-47M715 345l18-20" />
      <ellipse cx="660" cy="280" rx="18" ry="28" />
      <path d="M654 266h12v28h-12zM662 242h20v10h-20z" />
      <circle cx="628" cy="328" r="14" />
      <circle cx="665" cy="328" r="13" />
      <path d="M618 318l20 10-12 18zM655 325l18-5-8 26z" fill="#222" />
      <path d="M617 262v34M624 262v34M630 262v34" strokeWidth="4" strokeDasharray="5 3" />
      <path d="M672 231h40" strokeWidth="6" strokeDasharray="4 2" />
      <path d="M708 488h37v36h-37z" />
      <circle cx="727" cy="506" r="12" />
    </g>
    <Terminals x={293} y={437} kinds="pyyyyyyyypyyyyyypp" />
    <Port x={118} />
    <Port x={212} />
    <path d="M78 462h14M85 456v18M176 462h12M182 456v18" stroke="#555" strokeWidth="2" />
  </g>
);

const tops = [[561, 228], [617.5, 228], [553, 236], [609.5, 236]];
const bottoms = [[553, 567], [625.5, 567], [682, 567], [690, 559]];
const cells: [number, number, string][] = [
  [684, 646, "项目:"],
  [732, 646, "图纸编号:"],
  [808, 646, "比例:"],
  [837, 646, "版本:"],
  [881, 646, "页码:"],
  [684, 662, "日期:"],
  [732, 662, "功能:"],
  [780, 662, "位置:"],
  [837, 662, "当前页:"],
  [881, 662, "下一页:"],
];

const Schematic = ({ id }: { id: string }) => (
  <Sheet viewBox="262 200 678 480" role="img" aria-label="PLC总览图" fontFamily="Noto Sans CJK SC, sans-serif" fill="#222">
    <defs>
      <pattern id={id} x="278.500" y="219.500" width="8.070" height="8.070" patternUnits="userSpaceOnUse">
        <rect width="1" height="2" fill="#a6a6a6" />
      </pattern>
    </defs>
    <rect x="262.500" y="200.500" width="677" height="478.500" fill="#fff" stroke="#333" />
    <rect x="267" y="213" width="669" height="463" fill={`url(#${id})`} />
    <g fill="none" stroke="#333">
      <path d="M266.500 204.500h670v472h-670z" />
      <path d="M266.500 640V639.500h670M274.500 639V212.500h654V639" />
      <path d={Array.from({ length: 9 }, (_, i) => `M${339.900 + i * 65.400} 204v8`).join("")} />
      <path d={[1, 2, 3, 4, 5].map((i) => `M266 ${212 + i * 71.300}h8M928 ${212 + i * 71.300}h8`).join("")} />
      <path d="M367.500 640v36M520.500 640v36M682.500 640v36M682 656.500h254M730.500 640v36M806.500 640v16M779.500 657v19M835.500 640v36M879.500 640v36" />
    </g>
    <g fontSize="6" fontWeight="700" textAnchor="middle">
      {Array.from({ length: 10 }, (_, i) => <text key={i} x={307 + i * 65.400} y="211">{i}</text>)}
      {"ABCDEF".split("").map((c, i) => (
        <g key={c}>
          <text x="270.500" y={250 + i * 71.300}>{c}</text>
          <text x="932.500" y={250 + i * 71.300}>{c}</text>
        </g>
      ))}
    </g>
    {[228, 236, 559, 567].map((y, i) => (
      <g key={y} fontSize="6" fontFamily="Liberation Sans, sans-serif">
        <path d={`M310 ${y}H892`} stroke="#555" />
        <circle cx="310.500" cy={y} r="2.200" fill="#c3d43a" stroke="#444" strokeWidth=".800" />
        <circle cx="891.500" cy={y} r="2.200" fill="#c3d43a" stroke="#444" strokeWidth=".800" />
        <path d={`M314 ${y}h11M873 ${y}h14`} stroke="#555" strokeWidth="3" strokeDasharray="1 1 2 1" />
        <text x="283" y={y - 1} fill="#555">{i % 2 ? "DC24V-" : "DC24V+"}</text>
        <text x="894" y={y - 1} fill="#555">{i % 2 ? "DC24V-" : "DC24V+"}</text>
      </g>
    ))}
    <Plc />
    {tops.map(([x, y]) => (
      <g key={x}><path d={`M${x} ${y}V341`} stroke="#333" /><circle cx={x} cy={y} r="2" /></g>
    ))}
    {bottoms.map(([x, y]) => (
      <g key={x}><path d={`M${x} 446V${y}`} stroke="#333" /><circle cx={x} cy={y} r="2" /></g>
    ))}
    <g fontSize="5">
      <text x="373" y="650" fontSize="6">水泵项目</text>
      <text x="526" y="650" fontSize="6">PLC总览图</text>
      {cells.map(([x, y, label]) => <text key={label} x={x} y={y}>{label}</text>)}
      <text x="685" y="653" fontSize="6">水泵项目（1）</text>
      <text x="703" y="669">2020/5/9</text>
      <text x="764" y="669">=F1</text>
      <text x="820" y="669">+L1</text>
      <text x="871" y="669">3</text>
      <text x="910" y="653" fontSize="7">3</text>
    </g>
    <g fill="#3c65a8" textAnchor="middle">
      <text x="314" y="658" fontFamily="DejaVu Sans, sans-serif" fontSize="13" fontWeight="700">IGE+XAO</text>
      <text x="314" y="670" fontFamily="Liberation Sans, sans-serif" fontSize="7">GROUP</text>
    </g>
  </Sheet>
);

/* ---------- application ---------- */

const menu = ["文件", "首页", "常规", "编辑", "视图", "绘制", "功能", "Electrical", "3D输出", "批注", "扩展功能", "项目管理", "外部程序"];

export default function App() {
  return (
    <Stage>
      <GlobalStyle />
      <Frame>
        <TitleBar>
          <Title>SEE Electrical - 水泵项目（1）: =F1+L1 0003</Title>
          <WindowButtons>
            <IconButton aria-label="最小化"><Icon name="minimize" size={10} /></IconButton>
            <IconButton aria-label="还原"><Icon name="restore" size={10} /></IconButton>
            <IconButton aria-label="关闭"><Icon name="closeWhite" size={10} /></IconButton>
          </WindowButtons>
        </TitleBar>
        <TabBar>
          {menu.map((m, i) => (
            <MenuTab key={m} $active={i === 1} $pad={i === 0 ? 16 : m.length > 2 ? 13 : 12}>{m}</MenuTab>
          ))}
          <TabTools>
            <IconButton aria-label="折叠"><Icon name="chevronUp" size={8} /></IconButton>
            <IconButton>样式</IconButton>
            <IconButton aria-label="样式菜单"><Icon name="caretWhite" size={8} /></IconButton>
            <IconButton aria-label="帮助"><Icon name="help" size={13} /></IconButton>
            <IconButton aria-label="关于"><Icon name="about" size={13} /></IconButton>
          </TabTools>
        </TabBar>
        <Ribbon>
          {groups.map((g) => (
            <Group key={g.label}>
              <GroupGrid $cols={g.cols}>
                {g.items.map((it) => (
                  <RibbonButton key={it.text} $on={it.on} $tall={it.tall} disabled={it.off}>
                    <Icon name={it.icon} />
                    {it.text}
                  </RibbonButton>
                ))}
              </GroupGrid>
              <GroupLabel>{g.label}</GroupLabel>
            </Group>
          ))}
        </Ribbon>
        <Toolbar>
          {tools.map((t, i) => {
            if (t === "|") return <Separator key={i} />;
            if (t === "v") return <Arrow key={i} aria-label="更多"><Icon name="down" size={5} /></Arrow>;
            if (t === "#") return <GridStep key={i}><Icon name="grid" size={13} />5.00<Icon name="down" size={5} /></GridStep>;
            const name = t.replace("!", "");
            return <Tool key={i} $on={t !== name} aria-label={name}><Icon name={name} /></Tool>;
          })}
        </Toolbar>
        <Main>
          <Panel>
            <Head title="工作区" />
            <Tree>
              {nodes.map((n) => (
                <TreeRow key={n.text}>
                  {Array.from({ length: n.level }, (_, i) => (
                    <Guide key={i} $line={i > 0} />
                  ))}
                  <Guide $line={n.level > 0} $stub>
                    {n.toggle && <Toggle aria-label="展开或折叠">{n.toggle}</Toggle>}
                  </Guide>
                  <Icon name={n.icon} size={12} />
                  <TreeText $selected={n.selected}><MonoText>{n.text}</MonoText></TreeText>
                </TreeRow>
              ))}
            </Tree>
            <HScroll $width={89} />
            <DockTabs>
              <DockTab><Icon name="component" size={12} />组件</DockTab>
              <DockTab><Icon name="command" size={12} />命令</DockTab>
              <DockTab $active><Icon name="workspace" size={12} />工作区</DockTab>
            </DockTabs>
          </Panel>
          <Center>
            <DocTabs>
              <IconButton aria-label="向左"><Icon name="scrollLeft" size={8} /></IconButton>
              <DocTab>
                <Icon name="sheetMark" size={12} />
                <span>水泵项目（1） : =F1+L1 0003</span>
                <IconButton aria-label="关闭页面"><Icon name="close" size={8} /></IconButton>
              </DocTab>
              <IconButton aria-label="向右"><Icon name="scrollRight" size={8} /></IconButton>
            </DocTabs>
            <Canvas><Schematic id="sheetGrid" /></Canvas>
          </Center>
          <Panel>
            <Head title="符号" active />
            <FilterRow>
              <FilterLabel>筛选器<FilterInput type="text" /></FilterLabel>
              <SmallButton aria-label="查找"><Icon name="find" size={10} /></SmallButton>
              <IconButton aria-label="清除"><Icon name="cross" size={12} /></IconButton>
            </FilterRow>
            <ListBox>
              <SymbolList>
                <SymbolRow $root>
                  <BigToggle aria-label="折叠">-</BigToggle>
                  <Icon name="bigFolder" size={16} />
                  <RowText><MonoText>PLC</MonoText></RowText>
                </SymbolRow>
                {symbols.map(([icon, text], i) => (
                  <SymbolRow key={i}>
                    <Icon name={icon} size={18} />
                    {text ? (
                      <RowText><MonoText>{text}</MonoText></RowText>
                    ) : (
                      <Tip role="tooltip">
                        <MonoText>DI 信号 -1，向上，具有 1 个向上连接的信号卡</MonoText>
                        <Icon name="cursor" size={16} />
                      </Tip>
                    )}
                  </SymbolRow>
                ))}
                <HScroll $width={196} />
              </SymbolList>
              <VScroll />
            </ListBox>
            <DockTabs>
              <DockTab><Icon name="props" size={12} />属性</DockTab>
              <DockTab $active><Icon name="symbol" size={12} />符号</DockTab>
            </DockTabs>
            <PreviewBox>
              <Head title="预览" />
              <PreviewArea><Schematic id="previewGrid" /></PreviewArea>
            </PreviewBox>
          </Panel>
        </Main>
        <StatusBar>
          <span>要获得帮助，请按 F1</span>
          <Keys><span>CAP</span><b>NUM</b><span>SCRL</span></Keys>
        </StatusBar>
        <Subtitle>里面会有它的这个i o输入点</Subtitle>
        <Timer>00:52</Timer>
      </Frame>
    </Stage>
  );
}
